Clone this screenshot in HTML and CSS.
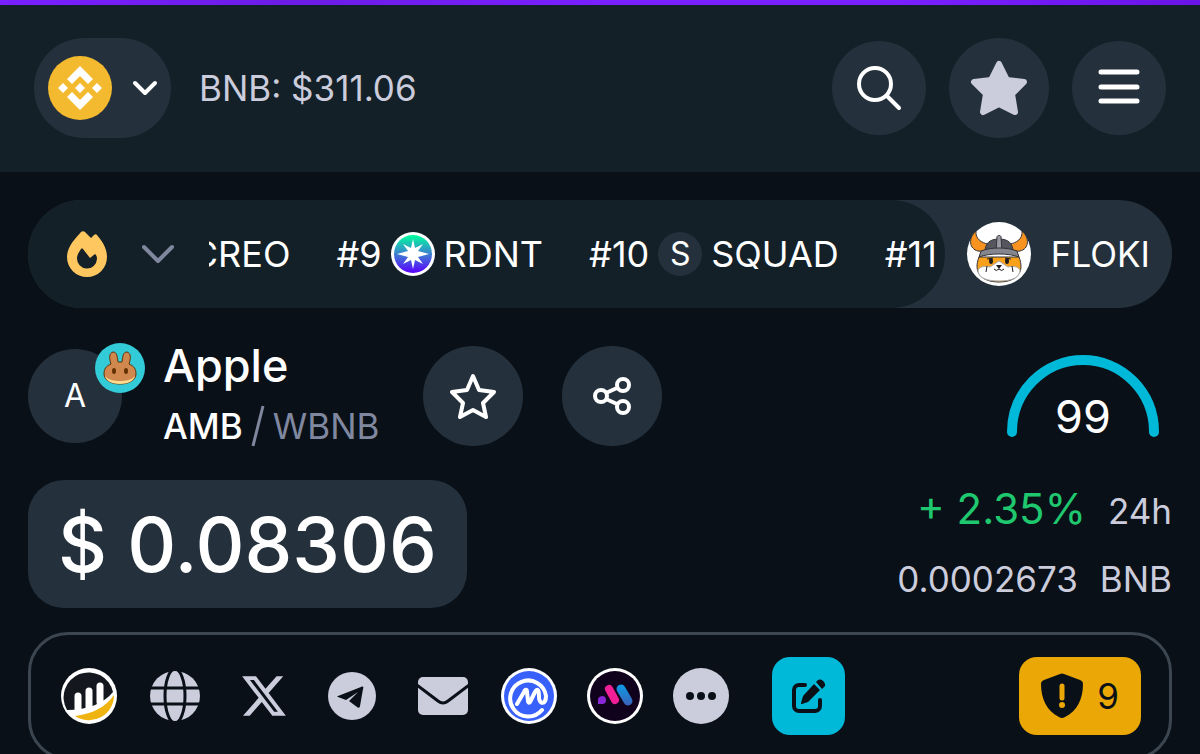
FILE: index.html
```html
<!DOCTYPE html>
<html lang="en">
<head>
  <meta charset="UTF-8">
  <meta name="viewport" content="width=device-width, initial-scale=1.0">
  <title>Apple AMB / WBNB</title>
  <link rel="stylesheet" href="styles.css">
</head>
<body>
  <div class="promo"></div>

  <header class="header">
    <div class="chain">
      <button class="chain-btn" aria-label="Select chain">
        <svg width="64" height="64" viewBox="0 0 64 64">
          <circle cx="32" cy="32" r="32" fill="#f3ba2f"/>
          <g fill="#fff">
            <path d="M32 10l13 13-5 5-8-8-8 8-5-5z"/>
            <path d="M32 54L19 41l5-5 8 8 8-8 5 5z"/>
            <path d="M32 27l5 5-5 5-5-5z"/>
            <path d="M15 27l5 5-5 5-5-5z"/>
            <path d="M49 27l5 5-5 5-5-5z"/>
          </g>
        </svg>
        <svg width="26" height="16" viewBox="0 0 26 16" fill="none" stroke="#fff" stroke-width="4" stroke-linecap="round" stroke-linejoin="round"><path d="M3 3l10 10L23 3"/></svg>
      </button>
      <span class="chain-price">BNB: $311.06</span>
    </div>
    <nav class="actions">
      <button class="round round-sm" aria-label="Search">
        <svg width="46" height="46" viewBox="0 0 46 46" fill="none" stroke="#fff" stroke-width="4" stroke-linecap="round"><circle cx="19" cy="19" r="16"/><path d="M31 31l12 12"/></svg>
      </button>
      <button class="round" aria-label="Favorites">
        <svg width="58" height="58" viewBox="0 0 58 58" fill="#cbccdc" stroke="#cbccdc" stroke-width="6" stroke-linejoin="round"><path d="M29 5l8 16 17 2-12 12 3 18-16-8-16 8 3-18L4 23l17-2z"/></svg>
      </button>
      <button class="round round-sm" aria-label="Menu">
        <svg width="42" height="42" viewBox="0 0 42 42" stroke="#fff" stroke-width="5" stroke-linecap="round"><path d="M3 5h36M3 20h36M3 34h36"/></svg>
      </button>
    </nav>
  </header>

  <main class="main">
    <section class="trending">
      <div class="trending-list">
        <button class="trending-btn" aria-label="Trending">
          <svg width="40" height="46" viewBox="0 0 40 46">
            <path d="M14 1C10 6 0 15 0 26a20 20 0 0 0 40 0C40 16 34 9 30 4c-1-1-2-1-3 0l-3 3-6-6c-1-1-3-1-4 0z" fill="#ffc75f"/>
            <path d="M14 18c-2 3-4 6-4 9a10 10 0 0 0 20 1c0-3-1-4-2-5l-5 4-7-9c-1-1-1-1-2 0z" fill="#142028"/>
          </svg>
          <svg width="32" height="20" viewBox="0 0 32 20" fill="none" stroke="#8088a0" stroke-width="4" stroke-linecap="round" stroke-linejoin="round"><path d="M2 3l14 14L30 3"/></svg>
        </button>
        <div class="ticker">
          <a href="#" class="ticker-item">CREO</a>
          <a href="#" class="ticker-item">#9
            <svg width="44" height="44" viewBox="0 0 44 44">
              <defs>
                <linearGradient id="rdnt" x1="0" y1="0" x2="0" y2="1">
                  <stop offset="0" stop-color="#00ff9d"/>
                  <stop offset=".5" stop-color="#3d7fd0"/>
                  <stop offset="1" stop-color="#5a00ff"/>
                </linearGradient>
              </defs>
              <circle cx="22" cy="22" r="22" fill="#fff"/>
              <circle cx="22" cy="22" r="19" fill="url(#rdnt)"/>
              <path fill="#fff" d="M22 7l2 9 8-4-5 7 11 3-11 3 5 7-8-4-2 9-2-9-8 4 5-7-11-3 11-3-5-7 8 4z"/>
            </svg>RDNT</a>
          <a href="#" class="ticker-item">#10 <span class="letter">S</span>SQUAD</a>
          <a href="#" class="ticker-item">#11</a>
        </div>
      </div>
      <a href="#" class="promoted">
        <svg width="64" height="64" viewBox="0 0 64 64">
          <circle cx="32" cy="32" r="32" fill="#fff"/>
          <g stroke="#33333a" stroke-width="1">
            <path d="M9 9C1 16 2 27 11 29c6 1 10-2 10-7-6-1-13-5-12-13z" fill="#f7931e"/>
            <path d="M55 9c8 7 7 18-2 20-6 1-10-2-10-7 6-1 13-5 12-13z" fill="#f7931e"/>
            <path d="M12 35C6 50 14 60 32 60s26-10 20-25z" fill="#f9a11b"/>
            <path d="M11 48c2-4 8-4 12-3l9-6 9 6c4-1 10-1 12 3 0 8-9 11-21 11s-21-3-21-11z" fill="#fff" stroke="#aaa"/>
            <path d="M18 30c0-9 5-13 14-13s14 4 14 13z" fill="#55565e"/>
            <path d="M30 15c0-2 4-2 4 0l1 15h-6z" fill="#9a9ba2"/>
            <path d="M12 35l2-6c10-4 26-4 36 0l2 6c-10-4-30-4-40 0z" fill="#85868d"/>
          </g>
          <g fill="#1c1c20">
            <ellipse cx="24" cy="39" rx="2" ry="3"/>
            <ellipse cx="40" cy="39" rx="2" ry="3"/>
            <path d="M29 43h6l-3 4z"/>
          </g>
          <path d="M27 47q2 3 5 0q3 3 5 0M20 37l6-1M38 36l6 1M20 44l-1 6M45 44l1 6" fill="none" stroke="#1c1c20"/>
        </svg>
        FLOKI
      </a>
    </section>

    <section class="token">
      <div class="avatar">A
        <svg class="avatar-dex" width="50" height="50" viewBox="0 0 50 50">
          <circle cx="25" cy="25" r="25" fill="#34cbd8"/>
          <path d="M16 21c-2-6-2-11 2-12 4 0 4 4 5 10h4c1-6 1-10 5-10 4 1 4 6 2 12 5 2 7 5 7 10 0 6-7 10-16 10S9 37 9 31c0-5 2-8 7-10z" fill="#d1884f" stroke="#633001" stroke-width="1"/>
          <path d="M10 33c3 4 9 5 15 5s12-1 15-5c-1 5-7 8-15 8s-14-3-15-8z" fill="#fedc90"/>
          <ellipse cx="19" cy="28" rx="2" ry="3" fill="#633001"/>
          <ellipse cx="31" cy="28" rx="2" ry="3" fill="#633001"/>
        </svg>
      </div>
      <div class="names">
        <h1 class="name">Apple</h1>
        <div class="pair"><b>AMB</b><svg width="14" height="42" viewBox="0 0 14 42" stroke="#8088a0" stroke-width="3"><path d="M12 1L2 41"/></svg><span>WBNB</span></div>
      </div>
      <button class="round" aria-label="Add to favorites">
        <svg width="46" height="46" viewBox="0 0 46 46" fill="none" stroke="#fff" stroke-width="4" stroke-linejoin="round"><path d="M23 3l6 14 15 2-11 11 3 14-13-7-13 7 3-14L2 19l15-2z"/></svg>
      </button>
      <button class="round" aria-label="Share">
        <svg width="40" height="40" viewBox="0 0 40 40" fill="none" stroke="#fff" stroke-width="4"><circle cx="9" cy="20" r="6"/><circle cx="31" cy="9" r="6"/><circle cx="31" cy="31" r="6"/><path d="M14 17l11-5M14 23l11 5"/></svg>
      </button>
      <div class="score">
        <svg width="152" height="82" viewBox="0 0 152 82" fill="none" stroke="#00b8d8" stroke-width="10" stroke-linecap="round"><path d="M5 77A71 72 0 0 1 147 77"/></svg>
        <span class="score-value">99</span>
      </div>
    </section>

    <section class="quote">
      <div class="price">$ 0.08306</div>
      <div class="change">
        <div class="change-row"><span class="up">+ 2.35%</span><span>24h</span></div>
        <div class="change-row"><span>0.0002673</span><span>BNB</span></div>
      </div>
    </section>

    <section class="links">
      <a href="#" aria-label="DEXTools">
        <svg width="56" height="56" viewBox="0 0 56 56">
          <circle cx="28" cy="28" r="28" fill="#fff"/>
          <path d="M6 42A25 25 0 1 1 52 24C43 35 27 42 6 42z" fill="#15171f"/>
          <path d="M53 27a25 25 0 0 1-39 21c17-2 31-9 39-21z" fill="#f0b410"/>
          <path d="M17 43V28M28 40V23M39 34V18" stroke="#fff" stroke-width="7" stroke-linecap="round"/>
        </svg>
      </a>
      <div class="socials">
        <a href="#" aria-label="Website">
          <svg width="50" height="50" viewBox="0 0 50 50">
            <circle cx="25" cy="25" r="25" fill="#cbccdc"/>
            <g fill="none" stroke="#0a1017" stroke-width="3"><ellipse cx="25" cy="25" rx="10" ry="27"/><path d="M0 17h50M0 33h50"/></g>
          </svg>
        </a>
        <a href="#" aria-label="X">
          <svg width="44" height="40" viewBox="1.2 2.2 21.7 19.6" fill="#cbccdc"><path d="M18.244 2.25h3.308l-7.227 8.26 8.502 11.24H16.17l-5.214-6.817L4.99 21.75H1.68l7.73-8.835L1.254 2.25H8.08l4.713 6.231zm-1.161 17.52h1.833L7.084 4.126H5.117z"/></svg>
        </a>
        <a href="#" aria-label="Telegram">
          <svg width="48" height="48" viewBox="0 0 48 48">
            <circle cx="24" cy="24" r="24" fill="#cbccdc"/>
            <path d="M10 24l23-9c2-1 3 0 2 2l-3 17c0 2-2 2-3 1l-8-6 9-9-12 8-8-3c-1 0-1-1 0-1z" fill="#0a1017"/>
          </svg>
        </a>
        <a href="#" aria-label="Email">
          <svg width="50" height="38" viewBox="0 0 50 38">
            <rect width="50" height="38" rx="5" fill="#cbccdc"/>
            <path d="M-1 8l21 16q5 4 10 0L51 8" fill="none" stroke="#0a1017" stroke-width="3"/>
          </svg>
        </a>
      </div>
      <div class="coins">
        <a href="#" aria-label="CoinMarketCap">
          <svg width="56" height="56" viewBox="0 0 56 56">
            <circle cx="28" cy="28" r="28" fill="#fff"/>
            <circle cx="28" cy="28" r="25" fill="#3861fb"/>
            <path d="M41 42A18 18 0 1 1 45 28c0 9-7 9-7 1 0-6-1-10-4-5l-5 10c-1 1-2 1-2-1l-1-9c0-3-2-3-3 0l-7 12" fill="none" stroke="#fff" stroke-width="4" stroke-linecap="round" stroke-linejoin="round"/>
          </svg>
        </a>
        <a href="#" aria-label="Moni">
          <svg width="56" height="56" viewBox="0 0 56 56">
            <defs>
              <linearGradient id="moni" x1="0" y1="0" x2="0" y2="1"><stop offset="0" stop-color="#0d9be8"/><stop offset="1" stop-color="#3a62b8"/></linearGradient>
            </defs>
            <circle cx="28" cy="28" r="28" fill="#fff"/>
            <circle cx="28" cy="28" r="25" fill="#10021c"/>
            <path d="M11 36v-4a4 4 0 1 1 5 4z" fill="#8a28d8"/>
            <path d="M22 21l6 11" stroke="#f01f96" stroke-width="8" stroke-linecap="round"/>
            <path d="M30 23a4 4 0 0 1 8-4l7 12a4 4 0 0 1-8 4z" fill="url(#moni)"/>
          </svg>
        </a>
        <button aria-label="More links">
          <svg width="56" height="56" viewBox="0 0 56 56"><circle cx="28" cy="28" r="28" fill="#cbccdc"/><g fill="#0a1017"><circle cx="17" cy="28" r="4"/><circle cx="28" cy="28" r="4"/><circle cx="39" cy="28" r="4"/></g></svg>
        </button>
      </div>
      <button class="edit" aria-label="Update info">
        <svg width="34" height="34" viewBox="0 0 34 34">
          <path d="M13 6H7a5 5 0 0 0-5 5v16a5 5 0 0 0 5 5h16a5 5 0 0 0 5-5v-6" fill="none" stroke="#0a1017" stroke-width="4" stroke-linecap="round"/>
          <path d="M22 5l6 6-12 12-6 2c-1 0-1 0-1-1l2-7zM24 3l2-2c3-2 8 2 7 6l-3 3z" fill="#0a1017"/>
        </svg>
      </button>
      <button class="alerts">
        <svg width="42" height="46" viewBox="0 0 42 46">
          <path d="M19 1q2-1 4 0l16 6q3 1 3 4c0 15-6 27-18 33q-3 2-6 0C6 38 0 26 0 11q0-3 3-4z" fill="#0a1017"/>
          <path d="M21 13v12" stroke="#eba706" stroke-width="5" stroke-linecap="round"/>
          <circle cx="21" cy="32" r="3" fill="#eba706"/>
        </svg>
        9
      </button>
    </section>
  </main>
</body>
</html>
```

FILE: styles.css
```css
* {
  box-sizing: border-box;
}

body {
  margin: 0;
  height: 100vh;
  overflow: hidden;
  background: #0a1017;
  color: #fff;
  font-family: "Inter", sans-serif;
  font-size: 35px;
}

a {
  color: inherit;
  text-decoration: none;
}

button {
  border: none;
  padding: 0;
  font: inherit;
  color: inherit;
  background: none;
  cursor: pointer;
}

svg {
  display: block;
  flex-shrink: 0;
}

.promo {
  height: 5px;
  background: linear-gradient(90deg, #7a1fff 0%, #6c1ce6 25%, #7a1fff 50%, #7a1fff 75%, #6a14e8 100%);
}

/* header */
.header {
  display: flex;
  justify-content: space-between;
  align-items: center;
  padding: 33px 34px 34px;
  background: #142028;
}

.chain {
  display: flex;
  align-items: center;
  gap: 28px;
}

.chain-btn {
  display: flex;
  align-items: center;
  gap: 20px;
  height: 100px;
  padding: 0 13px 0 14px;
  border-radius: 50px;
  background: #24313c;
}

.chain-price {
  color: #cbccdc;
}

.actions {
  display: flex;
  align-items: center;
  gap: 23px;
}

.round {
  display: flex;
  align-items: center;
  justify-content: center;
  width: 100px;
  height: 100px;
  border-radius: 50%;
  background: #24313c;
}

.round-sm {
  width: 94px;
  height: 94px;
}

.main {
  padding: 28px;
}

/* trending bar */
.trending {
  display: flex;
  height: 108px;
  border-radius: 54px;
  background: #24313c;
}

.trending-list {
  display: flex;
  flex: 1;
  min-width: 0;
  align-items: center;
  gap: 35px;
  padding: 0 8px 0 39px;
  border-radius: 54px;
  background: #142028;
  font-size: 36px;
}

.trending-btn {
  display: flex;
  align-items: center;
  gap: 35px;
}

.ticker {
  display: flex;
  flex: 1;
  min-width: 0;
  justify-content: flex-end;
  gap: 46px;
  overflow: hidden;
}

.ticker-item {
  display: flex;
  flex-shrink: 0;
  align-items: center;
  gap: 9px;
}

.letter {
  width: 44px;
  height: 44px;
  border-radius: 50%;
  background: #24313c;
  font-size: 32px;
  line-height: 44px;
  text-align: center;
}

.promoted {
  display: flex;
  align-items: center;
  gap: 20px;
  padding: 0 22px;
}

/* token */
.token {
  display: flex;
  align-items: center;
  margin-top: 28px;
}

.avatar {
  position: relative;
  width: 94px;
  height: 94px;
  border-radius: 50%;
  background: #24313c;
  font-size: 32px;
  line-height: 94px;
  text-align: center;
}

.avatar-dex {
  position: absolute;
  top: -6px;
  right: -23px;
}

.names {
  margin: 0 44px 0 41px;
}

.name {
  margin: 0;
  font-size: 45px;
  font-weight: 500;
  line-height: 60px;
}

.pair {
  display: flex;
  align-items: center;
  gap: 8px;
  line-height: 60px;
  color: #8088a0;
}

.pair b {
  font-weight: 500;
  color: #fff;
}

.token .round + .round {
  margin-left: 39px;
}

.score {
  position: relative;
  margin: 0 13px 0 auto;
}

.score-value {
  position: absolute;
  left: 0;
  right: 0;
  bottom: 0;
  font-size: 45px;
  line-height: 40px;
  text-align: center;
}

/* price */
.quote {
  display: flex;
  justify-content: space-between;
  align-items: center;
  height: 128px;
  margin-top: 24px;
}

.price {
  padding: 0 30px;
  border-radius: 36px;
  background: #24313c;
  font-size: 76px;
  font-weight: 500;
  line-height: 128px;
}

.change-row {
  display: flex;
  align-items: baseline;
  justify-content: flex-end;
  gap: 22px;
  line-height: 68px;
  color: #cbccdc;
}

.up {
  font-size: 42px;
  color: #1fc86f;
}

/* links */
.links {
  display: flex;
  align-items: center;
  gap: 33px;
  margin-top: 24px;
  padding: 22px 28px 22px 30px;
  border: 3px solid #3b4651;
  border-radius: 40px;
}

.socials {
  display: flex;
  align-items: center;
  gap: 42px;
}

.coins {
  display: flex;
  align-items: center;
  gap: 30px;
}

.edit {
  display: flex;
  align-items: center;
  justify-content: center;
  width: 73px;
  height: 78px;
  margin-left: 10px;
  border-radius: 18px;
  background: #00b8d8;
}

.alerts {
  display: flex;
  align-items: center;
  gap: 14px;
  height: 78px;
  margin-left: auto;
  padding: 0 22px;
  border-radius: 18px;
  background: #eba706;
  color: #0a1017;
}
```
